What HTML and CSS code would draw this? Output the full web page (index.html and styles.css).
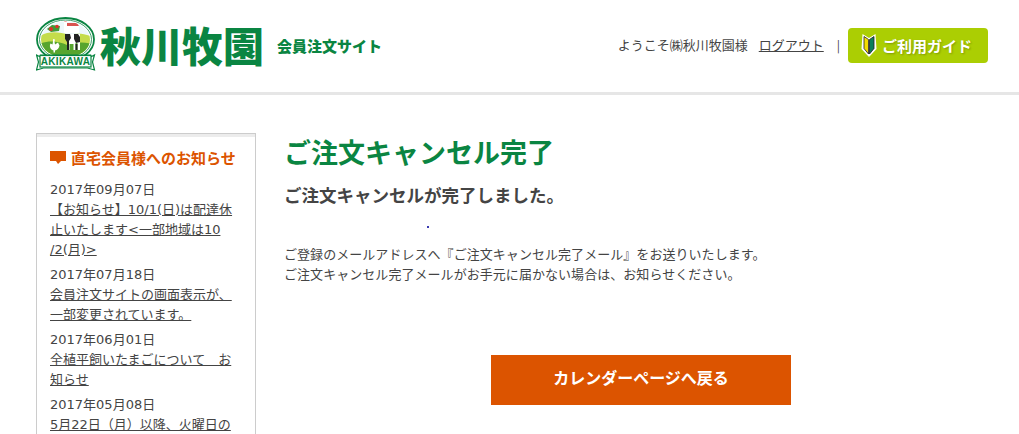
FILE: index.html
```html
<!DOCTYPE html>
<html lang="ja">
<head>
    <meta charset="UTF-8">
    <meta name="viewport" content="width=device-width, initial-scale=1.0">
    <title>ご注文キャンセル完了 - 秋川牧園</title>
    <link rel="stylesheet" href="styles.css">
</head>
<body>
    <header class="header">
        <div class="logo">
            <svg class="logo-mark" width="60" height="54" viewBox="0 0 60 54">
                <defs>
                    <clipPath id="scene">
                        <ellipse cx="29.500" cy="22.500" rx="24.500" ry="18"/>
                    </clipPath>
                </defs>
                <ellipse cx="29.500" cy="22.500" rx="28.500" ry="21.500" fill="#fff" stroke="#0a8542" stroke-width="1.800"/>
                <ellipse cx="29.500" cy="22.500" rx="26" ry="19.500" fill="#fff" stroke="#0a8542" stroke-width=".8"/>
                <g clip-path="url(#scene)">
                    <rect x="0" y="0" width="60" height="44" fill="#eef8fb"/>
                    <path d="M3 20C10 14 22 14 33 18c7-2 15-2 24 2v23H3z" fill="#c4dc4a"/>
                    <path d="M3 27c9-4 20-3 28 1 8-3 17-3 26-1v16H3z" fill="#57a52e"/>
                    <path d="M11 12l5-4 8 1-1 5-8 1z" fill="#3f9a35"/>
                    <circle cx="15" cy="12" r="2" fill="#d9342b"/>
                    <circle cx="21" cy="9.500" r="1.800" fill="#d9342b"/>
                    <path d="M28 4h3v5h12v7H28z" fill="#fff"/>
                    <path d="M28 5l1.500-3L31 5zM31 9h12l-2-3H31z" fill="#d9534f"/>
                    <path d="M29 17h15v16h-2.500v-7h-2v7h-2v-6h-4v6h-2v-8l-2.500-3z" fill="#fff"/>
                    <path d="M29 17h5l1 4-2 3v9h-2v-8l-2-3zM38 17h4l2 3v5l-4 1-2-4zM39.500 27h2v6h-2z" fill="#222"/>
                    <path d="M17 22l2 .5-.5 2 .5 3 3-2 1.500 3c-.5 3-2.500 4.500-4.500 5v2h-1.500v-2c-3-1-4.500-4-3-7l2 1 .5-3z" fill="#fff"/>
                </g>
                <path d="M.5 38l4 2v-2h50v2l4-2-2 7 2 8-7-2H7.500l-7 2 2-8z" fill="#fff" stroke="#0a8542" stroke-width="1.200"/>
                <rect x="4" y="38.500" width="51" height="11.500" fill="#fff" stroke="#0a8542" stroke-width="1.200"/>
                <text class="logo-mark-text" x="29.500" y="48" text-anchor="middle">AKIKAWA</text>
            </svg>
            <span class="logo-name">秋川牧園</span>
            <span class="logo-sub">会員注文サイト</span>
        </div>
        <div class="header-nav">
            <span class="welcome">ようこそ㈱秋川牧園様</span>
            <a class="logout" href="#">ログアウト</a>
            <span class="nav-sep">|</span>
            <a class="guide-button" href="#">
                <svg width="16" height="25" viewBox="0 0 16 25">
                    <path d="M1.500 1l6.500 4 6.500-4 1 15-7.500 8-7.500-8z" fill="#fff"/>
                    <path d="M3 3.500L7.500 6.500V21L3 15.500z" fill="#f4dc00" stroke="#222" stroke-width=".8"/>
                    <path d="M13 3.500L8.500 6.500V21L13 15.500z" fill="#0a7f5a" stroke="#222" stroke-width=".8"/>
                </svg>
                ご利用ガイド
            </a>
        </div>
    </header>

    <div class="wrapper">
        <aside class="side-box">
            <h2 class="side-title">
                <svg width="16" height="14" viewBox="0 0 16 14">
                    <path d="M0 0h16v10h-5l-3 3-2-3H0z" fill="#dc5400"/>
                </svg>
                直宅会員様へのお知らせ
            </h2>
            <div class="news-item">
                <p class="news-date">2017年09月07日</p>
                <a class="news-link" href="#">【お知らせ】10/1(日)は配達休止いたします&lt;一部地域は10<br>/2(月)&gt;</a>
            </div>
            <div class="news-item">
                <p class="news-date">2017年07月18日</p>
                <a class="news-link" href="#">会員注文サイトの画面表示が、一部変更されています。</a>
            </div>
            <div class="news-item">
                <p class="news-date">2017年06月01日</p>
                <a class="news-link" href="#">全植平飼いたまごについて　お知らせ</a>
            </div>
            <div class="news-item">
                <p class="news-date">2017年05月08日</p>
                <a class="news-link" href="#">5月22日（月）以降、火曜日の</a>
            </div>
        </aside>

        <main class="content">
            <h1 class="page-title">ご注文キャンセル完了</h1>
            <p class="lead">ご注文キャンセルが完了しました。</p>
            <span class="dot"></span>
            <p class="message">ご登録のメールアドレスへ『ご注文キャンセル完了メール』をお送りいたします。<br>ご注文キャンセル完了メールがお手元に届かない場合は、お知らせください。</p>
            <div class="back-row">
                <a class="back-button" href="#">カレンダーページへ戻る</a>
            </div>
        </main>
    </div>
</body>
</html>
```

FILE: styles.css
```css
html, body {
    height: 100%;
    overflow: hidden;
}
body {
    margin: 0;
    background-color: #ffffff;
    color: #444;
    font-family: 'Noto Sans CJK JP', 'Noto Sans', sans-serif;
    font-size: 13px;
}
a {
    color: #444;
}
.header {
    display: flex;
    justify-content: space-between;
    align-items: center;
    box-sizing: border-box;
    height: 95px;
    padding: 0 31px 1px 36px;
    border-bottom: 3px solid #e6e6e6;
}
.logo {
    display: flex;
    align-items: center;
    margin-bottom: 3px;
}
.logo-mark {
    flex: none;
}
.logo-mark-text {
    font-family: 'Liberation Sans', sans-serif;
    font-size: 10px;
    font-weight: bold;
    letter-spacing: 0.3px;
    fill: #0a8542;
}
.logo-name {
    margin-left: 4px;
    color: #0a8542;
    font-size: 41px;
    font-weight: 900;
    line-height: 1;
}
.logo-sub {
    margin: 3px 0 0 13px;
    color: #0a8542;
    font-size: 15px;
    font-weight: 900;
}
.header-nav {
    display: flex;
    align-items: center;
}
.welcome {
    margin-bottom: 3px;
}
.logout {
    margin: 0 0 3px 11px;
}
.nav-sep {
    margin: 0 0 3px 13px;
    font-size: 12px;
}
.guide-button {
    display: flex;
    align-items: center;
    gap: 5px;
    box-sizing: border-box;
    width: 140px;
    height: 35px;
    margin-left: 8px;
    padding-left: 13px;
    background-color: #abce03;
    border-radius: 4px;
    color: #fff;
    font-size: 15px;
    font-weight: 700;
    text-decoration: none;
    text-shadow: 1px 1px 2px rgba(0, 0, 0, 0.25);
}
.wrapper {
    display: flex;
    padding: 38px 0 0 36px;
}
.side-box {
    flex: none;
    box-sizing: border-box;
    width: 220px;
    padding: 13px 13px 0;
    border: 1px solid #ccc;
    box-shadow: inset 0 3px 0 #ececec;
    font-family: 'DejaVu Sans', 'Noto Sans CJK JP', sans-serif;
}
.side-title {
    display: flex;
    align-items: center;
    gap: 5px;
    margin: 0 0 11px;
    color: #dc5400;
    font-family: 'Noto Sans CJK JP', sans-serif;
    font-size: 15px;
    font-weight: 700;
    line-height: 22px;
}
.news-item {
    margin-bottom: 5px;
}
.news-date {
    margin: 0;
    line-height: 20px;
}
.news-link {
    display: block;
    line-height: 20px;
    word-break: break-all;
}
.content {
    flex: none;
    width: 714px;
    margin-left: 28px;
}
.page-title {
    margin: 0;
    color: #0a8542;
    font-size: 27px;
    font-weight: 700;
    line-height: 38px;
}
.lead {
    margin: 10px 0 0;
    font-size: 17.500px;
    font-weight: 700;
    line-height: 28px;
}
.dot {
    display: block;
    width: 2px;
    height: 2px;
    margin: 17px 0 0 143px;
    background-color: #3a3ab0;
}
.message {
    margin: 16px 0 0;
    letter-spacing: 0.05px;
    line-height: 20px;
}
.back-row {
    display: flex;
    justify-content: center;
    margin-top: 71px;
}
.back-button {
    display: block;
    width: 300px;
    height: 50px;
    background-color: #dc5400;
    color: #fff;
    font-size: 16px;
    font-weight: 700;
    line-height: 44px;
    text-align: center;
    text-decoration: none;
}
```
